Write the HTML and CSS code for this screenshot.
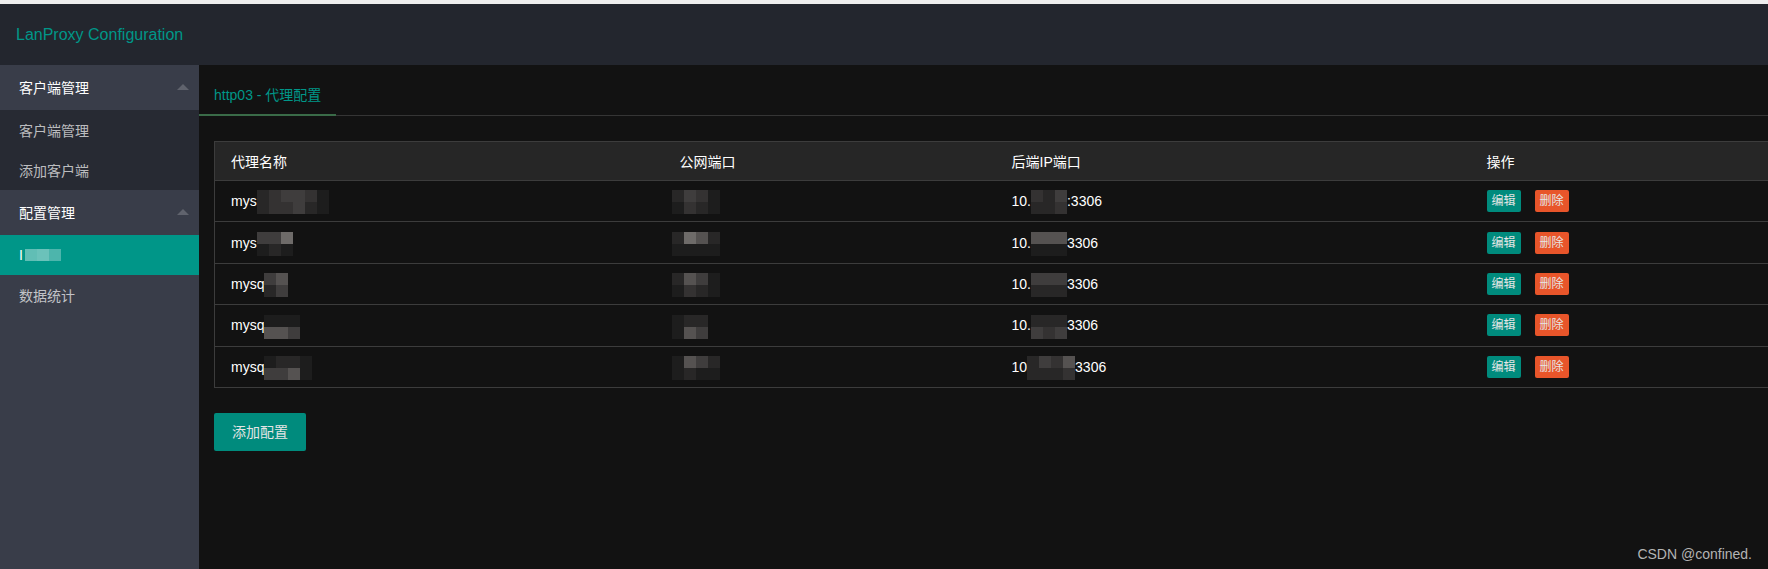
FILE: index.html
```html
<!DOCTYPE html>
<html lang="zh-CN">
<head>
<meta charset="utf-8">
<title>LanProxy Configuration</title>
<link rel="stylesheet" href="styles.css">
</head>
<body>
<div class="top-strip"></div>
<header class="header">
  <div class="logo">LanProxy Configuration</div>
</header>
<div class="layout">
  <aside class="side">
    <ul class="nav">
      <li class="nav-item">
        <a class="nav-title">客户端管理<span class="more"></span></a>
        <dl class="child">
          <dd><a>客户端管理</a></dd>
          <dd><a>添加客户端</a></dd>
        </dl>
      </li>
      <li class="nav-item">
        <a class="nav-title">配置管理<span class="more"></span></a>
        <dl class="child">
          <dd class="this"><a>I<span class="blur-block"><span></span><span></span><span></span></span></a></dd>
        </dl>
      </li>
      <li class="nav-item plain"><a>数据统计</a></li>
    </ul>
  </aside>
  <main class="main">
    <ul class="tab-title">
      <li class="tab-this">http03 - 代理配置</li>
    </ul>
    <div class="table-wrap">
      <table class="grid">
        <colgroup>
          <col class="w1"><col class="w2"><col class="w3"><col>
        </colgroup>
        <thead>
          <tr><th>代理名称</th><th>公网端口</th><th>后端IP端口</th><th>操作</th></tr>
        </thead>
        <tbody>
          <tr>
            <td>mys<span class="mz c6"><i class="s2"></i><i class="s3"></i><i class="s4"></i><i class="s4"></i><i class="s3"></i><i class="s1"></i><i class="s2"></i><i class="s3"></i><i class="s3"></i><i class="s4"></i><i class="s2"></i><i class="s1"></i></span></td>
            <td><span class="mz c4 lead"><i class="s2"></i><i class="s4"></i><i class="s3"></i><i class="s1"></i><i class="s1"></i><i class="s3"></i><i class="s2"></i><i class="s1"></i></span></td>
            <td>10.<span class="mz c3"><i class="s3"></i><i class="s2"></i><i class="s4"></i><i class="s2"></i><i class="s2"></i><i class="s3"></i></span>:3306</td>
            <td><div class="ops"><span class="btn-xs edit">编辑</span><span class="btn-xs del">删除</span></div></td>
          </tr>
          <tr>
            <td>mys<span class="mz c3"><i class="s4"></i><i class="s4"></i><i class="s6"></i><i class="s1"></i><i class="s2"></i><i class="s1"></i></span></td>
            <td><span class="mz c4 lead"><i class="s2"></i><i class="s6"></i><i class="s5"></i><i class="s2"></i><i class="s1"></i><i class="s1"></i><i class="s1"></i><i class="s1"></i></span></td>
            <td>10.<span class="mz c3"><i class="s5"></i><i class="s5"></i><i class="s5"></i><i class="s1"></i><i class="s1"></i><i class="s1"></i></span>3306</td>
            <td><div class="ops"><span class="btn-xs edit">编辑</span><span class="btn-xs del">删除</span></div></td>
          </tr>
          <tr>
            <td>mysq<span class="mz c2"><i class="s4"></i><i class="s5"></i><i class="s2"></i><i class="s4"></i></span></td>
            <td><span class="mz c4 lead"><i class="s2"></i><i class="s5"></i><i class="s4"></i><i class="s1"></i><i class="s1"></i><i class="s3"></i><i class="s2"></i><i class="s1"></i></span></td>
            <td>10.<span class="mz c3"><i class="s4"></i><i class="s4"></i><i class="s4"></i><i class="s2"></i><i class="s2"></i><i class="s2"></i></span>3306</td>
            <td><div class="ops"><span class="btn-xs edit">编辑</span><span class="btn-xs del">删除</span></div></td>
          </tr>
          <tr>
            <td>mysq<span class="mz c3"><i class="s1"></i><i class="s1"></i><i class="s1"></i><i class="s5"></i><i class="s5"></i><i class="s4"></i></span></td>
            <td><span class="mz c4 lead"><i class="s1"></i><i class="s2"></i><i class="s2"></i><i class="s0"></i><i class="s1"></i><i class="s5"></i><i class="s4"></i><i class="s0"></i></span></td>
            <td>10.<span class="mz c3"><i class="s2"></i><i class="s2"></i><i class="s2"></i><i class="s4"></i><i class="s3"></i><i class="s4"></i></span>3306</td>
            <td><div class="ops"><span class="btn-xs edit">编辑</span><span class="btn-xs del">删除</span></div></td>
          </tr>
          <tr>
            <td>mysq<span class="mz c4"><i class="s1"></i><i class="s2"></i><i class="s2"></i><i class="s1"></i><i class="s4"></i><i class="s4"></i><i class="s5"></i><i class="s1"></i></span></td>
            <td><span class="mz c4 lead"><i class="s1"></i><i class="s5"></i><i class="s4"></i><i class="s2"></i><i class="s1"></i><i class="s2"></i><i class="s1"></i><i class="s1"></i></span></td>
            <td>10<span class="mz c4"><i class="s2"></i><i class="s4"></i><i class="s3"></i><i class="s5"></i><i class="s2"></i><i class="s2"></i><i class="s2"></i><i class="s3"></i></span>3306</td>
            <td><div class="ops"><span class="btn-xs edit">编辑</span><span class="btn-xs del">删除</span></div></td>
          </tr>
        </tbody>
      </table>
    </div>
    <div class="actions">
      <span class="btn">添加配置</span>
    </div>
  </main>
</div>
<div class="watermark">CSDN @confined.</div>
</body>
</html>
```
FILE: styles.css
```css
* { box-sizing: border-box; }
html, body { margin: 0; padding: 0; }
body {
  width: 1768px;
  height: 569px;
  overflow: hidden;
  display: flex;
  flex-direction: column;
  background: #121212;
  font-family: "Liberation Sans", "Noto Sans CJK SC", sans-serif;
  font-size: 14px;
  color: #fff;
  position: relative;
}
ul, dl, dd { margin: 0; padding: 0; list-style: none; }

.top-strip { height: 4px; background: #eeeeee; flex: none; }

.header {
  height: 61px;
  flex: none;
  background: #23262e;
  display: flex;
  align-items: center;
  padding-left: 16px;
}
.logo {
  color: #009688;
  font-size: 16px;
  margin-top: 1px;
}

.layout { flex: 1; display: flex; min-height: 0; }

.side {
  width: 199px;
  flex: none;
  background: #393d49;
}
.nav-title, .child a, .plain a {
  display: flex;
  align-items: center;
  position: relative;
  padding-left: 19px;
}
.nav-title {
  height: 45px;
  color: #fff;
  padding-bottom: 2px;
}
.more {
  position: absolute;
  right: 10px;
  top: 19px;
  width: 0;
  height: 0;
  border-left: 6px solid transparent;
  border-right: 6px solid transparent;
  border-bottom: 6px solid rgba(255,255,255,0.2);
}
.child { background: rgba(0,0,0,0.3); }
.child a, .plain a {
  height: 40px;
  color: rgba(255,255,255,0.7);
}
.child .this { background: #009688; }
.child .this a { color: #fff; padding-left: 19px; }
.blur-block {
  display: inline-flex;
  margin-left: 2px;
  height: 12px;
}
.blur-block span { width: 12px; height: 12px; background: rgba(255,255,255,0.38); }
.blur-block span:nth-child(2) { background: rgba(255,255,255,0.42); }
.blur-block span:nth-child(3) { background: rgba(255,255,255,0.3); }

.main {
  flex: 1;
  min-width: 0;
  overflow: hidden;
  background: #121212;
}
.tab-title {
  display: flex;
  margin-top: 10px;
  height: 41px;
  border-bottom: 1px solid #353535;
}
.tab-this {
  position: relative;
  padding: 0 15px;
  line-height: 40px;
  color: #009688;
}
.tab-this::after {
  content: "";
  position: absolute;
  left: 0;
  right: 0;
  bottom: -1px;
  height: 2px;
  background: #3a6b48;
}

.table-wrap { margin: 25px 0 0 15px; width: 1700px; }
.grid {
  width: 1700px;
  border-collapse: collapse;
  table-layout: fixed;
  border: 1px solid #3c3c3c;
  color: #fff;
}
.w1 { width: 449px; }
.w2 { width: 332px; }
.w3 { width: 475px; }
.grid th {
  height: 39px;
  padding: 0 16px;
  text-align: left;
  font-weight: normal;
  background: #262626;
  border-bottom: 1px solid #3c3c3c;
}
.grid td {
  height: 41.4px;
  padding: 0 16px;
  border-bottom: 1px solid #3c3c3c;
  white-space: nowrap;
}

.mz {
  display: inline-grid;
  grid-template-rows: repeat(2, 12px);
  vertical-align: middle;
  margin: -6px 0 -6px 0;
}
.mz.c2 { grid-template-columns: repeat(2, 12px); }
.mz.c3 { grid-template-columns: repeat(3, 12px); }
.mz.c4 { grid-template-columns: repeat(4, 12px); }
.mz.c6 { grid-template-columns: repeat(6, 12px); }
.mz.lead { margin-left: -8px; }
.mz i { display: block; width: 12px; height: 12px; }
.s0 { background: #121212; }
.s1 { background: #1d1d1d; }
.s2 { background: #282727; }
.s3 { background: #343232; }
.s4 { background: #3f3d3d; }
.s5 { background: #555251; }
.s6 { background: #6e6b69; }

.ops { display: flex; gap: 14px; }
.btn-xs {
  display: inline-block;
  height: 22px;
  line-height: 22px;
  padding: 0 5px;
  font-size: 12px;
  border-radius: 2px;
  color: #e6e6e6;
}
.edit { background: #008b7d; }
.del { background: #e8552a; }

.actions { margin: 25px 0 0 15px; }
.btn {
  display: inline-block;
  height: 38px;
  line-height: 38px;
  padding: 0 18px;
  background: #008b7d;
  color: #e4e4e4;
  border-radius: 2px;
  font-size: 14px;
}

.watermark {
  position: absolute;
  right: 16px;
  bottom: 7px;
  color: #b4b4b4;
  font-size: 14px;
}
```
